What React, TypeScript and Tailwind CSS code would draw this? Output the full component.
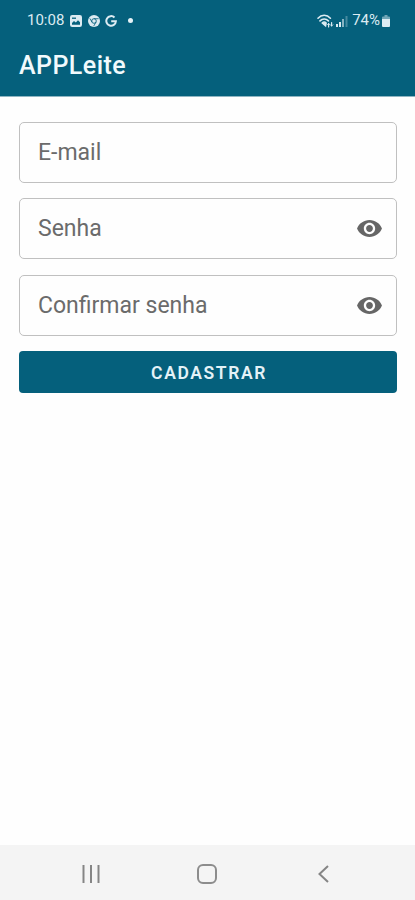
interface FieldProps {
  label: string;
  password?: boolean;
}

function EyeIcon() {
  return (
    <svg viewBox="1 4.5 22 15" className="w-[25px] h-[17px] shrink-0" fill="#666666">
      <path d="M12 4.5C7 4.5 2.73 7.61 1 12c1.73 4.39 6 7.5 11 7.5s9.27-3.11 11-7.5c-1.73-4.39-6-7.5-11-7.5zM12 17c-2.76 0-5-2.24-5-5s2.24-5 5-5 5 2.24 5 5-2.24 5-5 5zm0-8c-1.66 0-3 1.34-3 3s1.34 3 3 3 3-1.34 3-3-1.34-3-3-3z" />
    </svg>
  );
}

function Field({ label, password }: FieldProps) {
  return (
    <div className="flex items-center justify-between h-[61px] pl-[18px] pr-[14px] border-[1.5px] border-[#c0c0c0] rounded-[5px]">
      <span className="text-[23px] leading-none text-[#6b6b6b]">{label}</span>
      {password && <EyeIcon />}
    </div>
  );
}

function StatusBar() {
  return (
    <div className="flex items-center justify-between h-[41px] pl-[27px] pr-[25px] text-[#dcebf2]">
      <div className="flex items-center">
        <span className="w-[43px] text-[15px] leading-none whitespace-nowrap">10:08</span>
        {/* Gallery */}
        <svg viewBox="0 0 12 12" className="w-[12px] h-[12px]">
          <rect width="12" height="12" rx="2.2" fill="currentColor" />
          <path d="M2 9.7V8l2-2 1.8 1.5L8 5.2l2 2v2.5z" fill="#05607c" />
          <path d="M2 3.2h4" stroke="#05607c" strokeWidth="1.3" />
        </svg>
        {/* Chrome */}
        <svg viewBox="0 0 12 12" className="w-[12px] h-[12px] ml-[6px]">
          <circle cx="6" cy="6" r="6" fill="currentColor" />
          <circle cx="6" cy="6" r="2.3" fill="none" stroke="#05607c" strokeWidth="0.9" />
          <path d="M6 3.7h4.6M4 7.1 1.8 3.4M8 7.1l-2.3 4" stroke="#05607c" strokeWidth="0.8" />
        </svg>
        {/* Google */}
        <svg viewBox="0 0 12 12" className="w-[12px] h-[12px] ml-[5px]" fill="none" stroke="currentColor" strokeWidth="2">
          <path d="M9.5 2.5A4.8 4.8 0 1 0 10.9 6.2H6.2" />
        </svg>
        <span className="w-[5px] h-[5px] ml-[11px] rounded-full bg-[#e6f2f7]" />
      </div>
      <div className="flex items-center">
        {/* Wifi */}
        <svg viewBox="0 0 17 14" className="w-[17px] h-[14px]" fill="none" stroke="currentColor" strokeLinecap="round">
          <path d="M1 4.2C4.5.3 9.9.3 13.4 4.2M3 6.9c2.4-2.5 6-2.5 8.4 0" strokeWidth="1.6" />
          <path d="M5.2 9c1.2-1.1 2.8-1.1 4 0L8.6 12z" fill="currentColor" strokeWidth="1.4" />
          <path d="M11.6 13V9.6M14.6 8.6V12" strokeWidth="1.2" />
          <path d="m10.5 10.6 1.1-1.2 1.1 1.2M13.4 10.8l1.2 1.2 1.2-1.2" strokeWidth="0.9" />
        </svg>
        {/* Signal */}
        <svg viewBox="0 0 12 12" className="w-[12px] h-[12px] ml-[2px]" fill="currentColor">
          <rect x="0" y="9" width="2" height="3" />
          <rect x="3" y="7" width="2" height="5" />
          <rect x="6" y="4" width="2" height="8" opacity="0.6" />
          <rect x="9.5" y="1" width="2" height="11" opacity="0.3" />
        </svg>
        <span className="ml-[4px] text-[15px] leading-none">74%</span>
        {/* Battery */}
        <svg viewBox="0 0 8 12" className="w-[8px] h-[12px] ml-[2px]" fill="currentColor">
          <path d="M2.5 0h3v1.5H7A1 1 0 0 1 8 2.5V4H0V2.5a1 1 0 0 1 1-1h1.5z" opacity="0.5" />
          <path d="M0 4h8v7a1 1 0 0 1-1 1H1a1 1 0 0 1-1-1z" />
        </svg>
      </div>
    </div>
  );
}

function NavBar() {
  return (
    <div className="flex items-center justify-between h-[55px] pt-[2px] pl-[82px] pr-[86px] bg-[#f4f4f4]">
      <svg viewBox="0 0 18 18" className="w-[18px] h-[18px]" stroke="#858585" strokeWidth="2">
        <path d="M1.5 0v18M9 0v18M16.5 0v18" />
      </svg>
      <div className="w-[20px] h-[20px] mr-[4px] border-2 border-[#8c8c8c] rounded-[6px]" />
      <svg viewBox="0 0 11 18" className="w-[11px] h-[18px]" fill="none" stroke="#858585" strokeWidth="2">
        <path d="M10 1 1.5 9l8.5 8" />
      </svg>
    </div>
  );
}

export default function App() {
  return (
    <div className="flex flex-col w-[415px] h-[900px] bg-[#fefefe] font-['Roboto',sans-serif] overflow-hidden">
      <header className="h-[97px] shrink-0 bg-[#05607c] border-b border-[#8fb5c2]">
        <StatusBar />
        <h1 className="pl-[19px] pt-[10px] text-[25px] leading-[30px] font-medium tracking-[0.45px] text-[#f1fafd]">APPLeite</h1>
      </header>

      <main className="flex-1 flex flex-col gap-[15.5px] pl-[19px] pr-[18px] pt-[24.5px]">
        <Field label="E-mail" />
        <Field label="Senha" password />
        <Field label="Confirmar senha" password />
        <button className="h-[42px] pt-[3px] pl-[2px] rounded-[4px] bg-[#05607c] text-[17.5px] leading-none font-semibold tracking-[1.6px] text-[#e4f2f7]">
          CADASTRAR
        </button>
      </main>

      <NavBar />
    </div>
  );
}
